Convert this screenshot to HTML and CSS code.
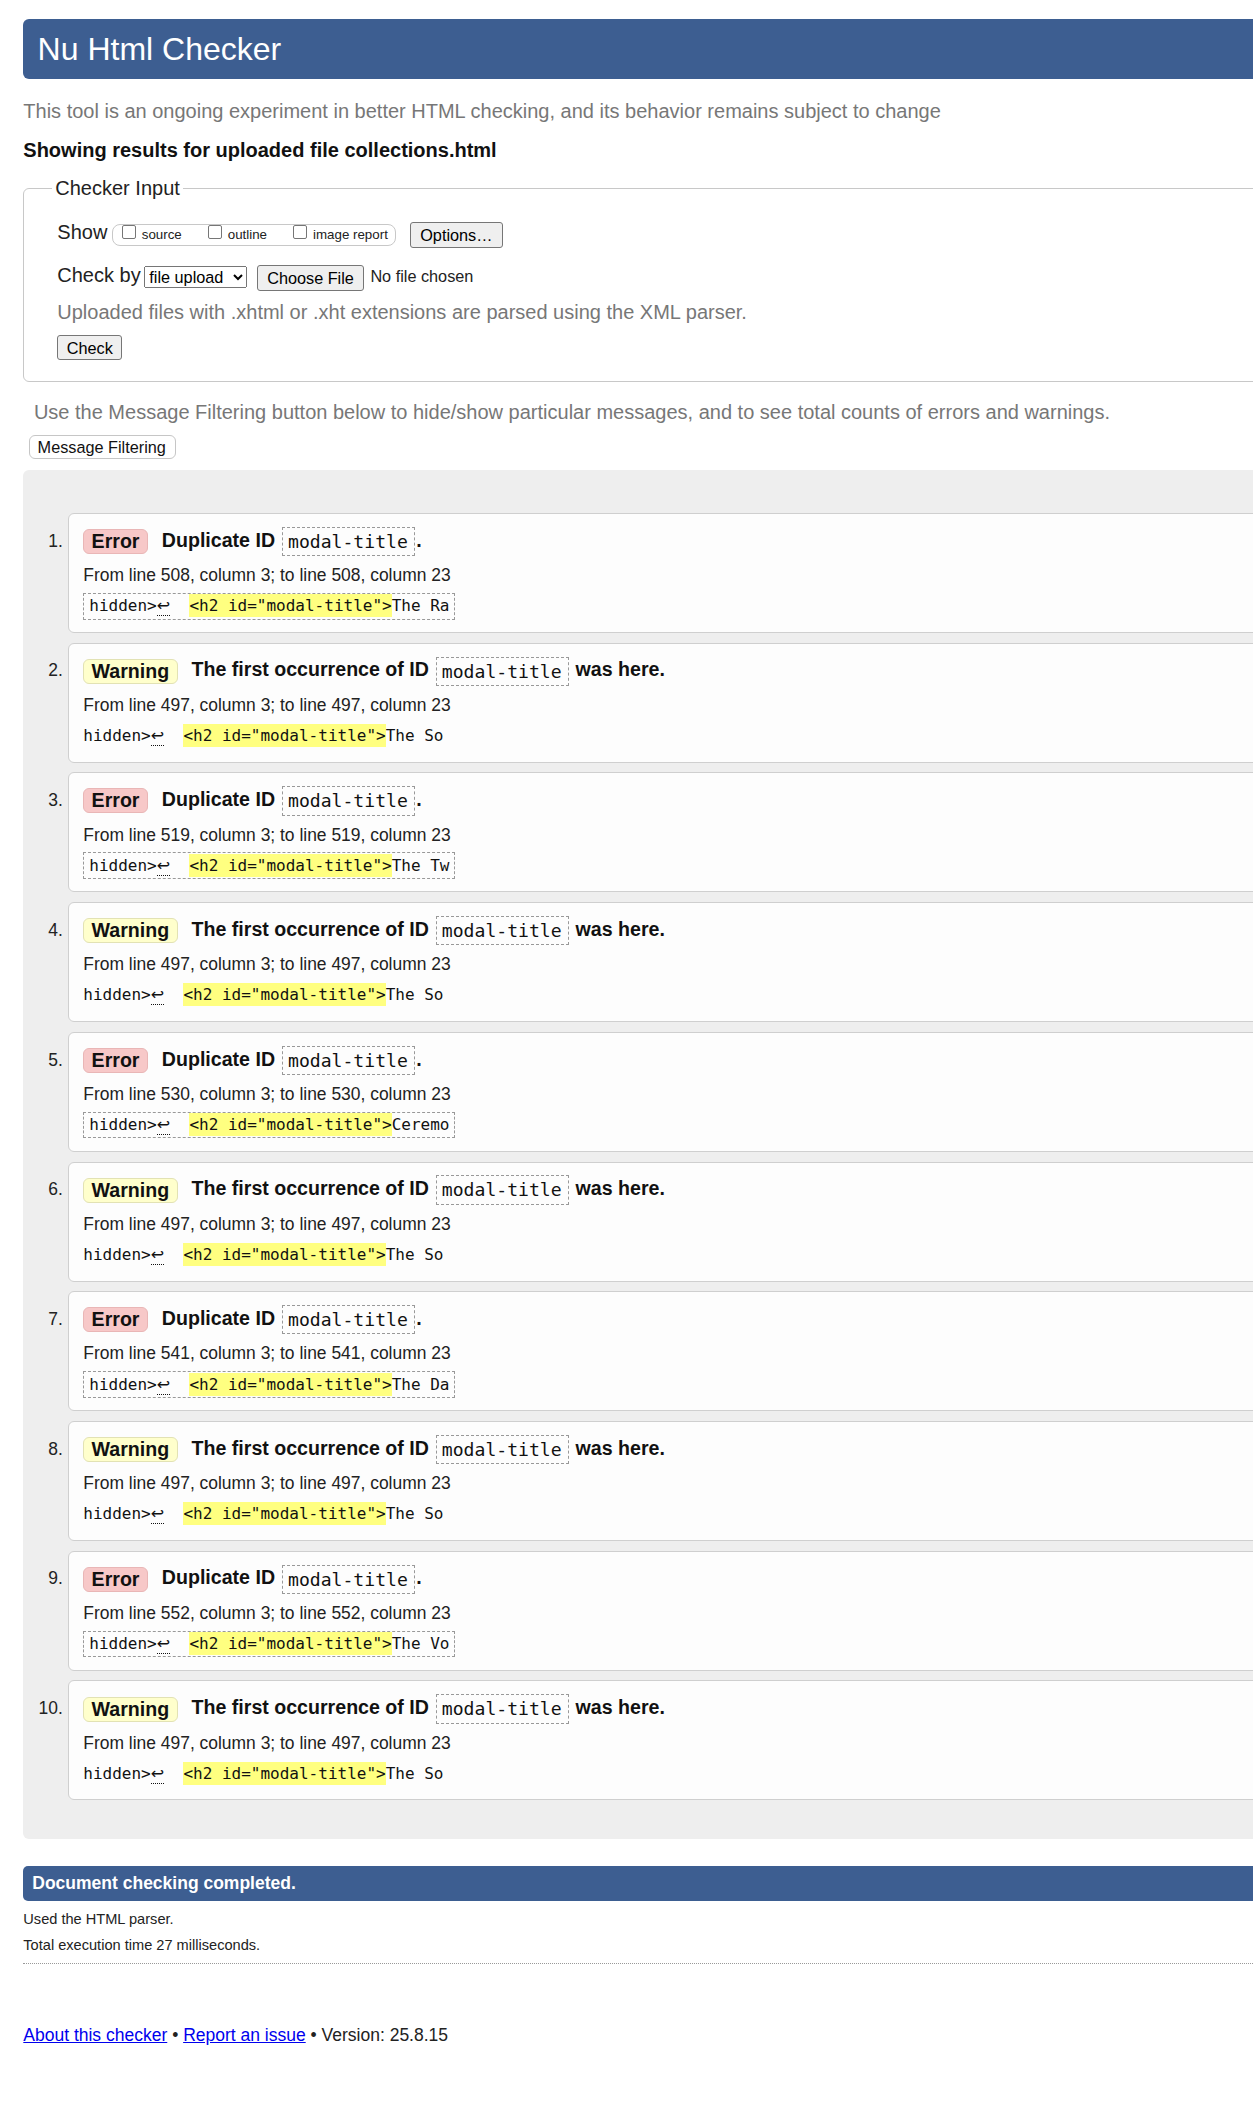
FILE: index.html
```html
<!DOCTYPE html>
<html lang="en">
<head>
<meta charset="utf-8">
<title>Showing results for uploaded file collections.html - Nu Html Checker</title>
<link rel="stylesheet" href="styles.css">
</head>
<body>
<div class="page">
  <h1 class="masthead">Nu Html Checker</h1>
  <p class="tagline">This tool is an ongoing experiment in better HTML checking, and its behavior remains subject to change</p>
  <p class="results-for">Showing results for uploaded file collections.html</p>

  <form class="checker" action="#">
    <fieldset class="checker-input">
      <legend>Checker Input</legend>
      <div class="row row-show">
        <span class="row-label label-show">Show</span>
        <span class="show-group">
          <label class="opt"><input type="checkbox" class="cb"><span>source</span></label>
          <label class="opt"><input type="checkbox" class="cb"><span>outline</span></label>
          <label class="opt"><input type="checkbox" class="cb"><span>image report</span></label>
        </span>
        <button type="button" class="btn btn-options">Options…</button>
      </div>
      <div class="row row-check-by">
        <span class="row-label label-checkby">Check by</span>
        <select class="sel"><option>file upload</option></select>
        <button type="button" class="btn btn-file">Choose File</button>
        <span class="file-status">No file chosen</span>
      </div>
      <p class="hint">Uploaded files with .xhtml or .xht extensions are parsed using the XML parser.</p>
      <div class="row row-submit">
        <button type="button" class="btn btn-check">Check</button>
      </div>
    </fieldset>
  </form>

  <p class="filter-note">Use the Message Filtering button below to hide/show particular messages, and to see total counts of errors and warnings.</p>
  <button type="button" class="btn-filter">Message Filtering</button>

  <ol class="messages">
    <li class="msg msg-error">
      <p class="msg-title"><span class="badge">Error</span>Duplicate ID <code class="id">modal-title</code>.</p>
      <p class="msg-loc">From line 508, column 3; to line 508, column 23</p>
      <p class="extract">hidden&gt;<span class="lf">↩</span>  <mark class="hl">&lt;h2 id="modal-title"&gt;</mark>The Ra</p>
    </li>
    <li class="msg msg-warning">
      <p class="msg-title"><span class="badge">Warning</span>The first occurrence of ID <code class="id">modal-title</code> was here.</p>
      <p class="msg-loc">From line 497, column 3; to line 497, column 23</p>
      <p class="extract">hidden&gt;<span class="lf">↩</span>  <mark class="hl">&lt;h2 id="modal-title"&gt;</mark>The So</p>
    </li>
    <li class="msg msg-error">
      <p class="msg-title"><span class="badge">Error</span>Duplicate ID <code class="id">modal-title</code>.</p>
      <p class="msg-loc">From line 519, column 3; to line 519, column 23</p>
      <p class="extract">hidden&gt;<span class="lf">↩</span>  <mark class="hl">&lt;h2 id="modal-title"&gt;</mark>The Tw</p>
    </li>
    <li class="msg msg-warning">
      <p class="msg-title"><span class="badge">Warning</span>The first occurrence of ID <code class="id">modal-title</code> was here.</p>
      <p class="msg-loc">From line 497, column 3; to line 497, column 23</p>
      <p class="extract">hidden&gt;<span class="lf">↩</span>  <mark class="hl">&lt;h2 id="modal-title"&gt;</mark>The So</p>
    </li>
    <li class="msg msg-error">
      <p class="msg-title"><span class="badge">Error</span>Duplicate ID <code class="id">modal-title</code>.</p>
      <p class="msg-loc">From line 530, column 3; to line 530, column 23</p>
      <p class="extract">hidden&gt;<span class="lf">↩</span>  <mark class="hl">&lt;h2 id="modal-title"&gt;</mark>Ceremo</p>
    </li>
    <li class="msg msg-warning">
      <p class="msg-title"><span class="badge">Warning</span>The first occurrence of ID <code class="id">modal-title</code> was here.</p>
      <p class="msg-loc">From line 497, column 3; to line 497, column 23</p>
      <p class="extract">hidden&gt;<span class="lf">↩</span>  <mark class="hl">&lt;h2 id="modal-title"&gt;</mark>The So</p>
    </li>
    <li class="msg msg-error">
      <p class="msg-title"><span class="badge">Error</span>Duplicate ID <code class="id">modal-title</code>.</p>
      <p class="msg-loc">From line 541, column 3; to line 541, column 23</p>
      <p class="extract">hidden&gt;<span class="lf">↩</span>  <mark class="hl">&lt;h2 id="modal-title"&gt;</mark>The Da</p>
    </li>
    <li class="msg msg-warning">
      <p class="msg-title"><span class="badge">Warning</span>The first occurrence of ID <code class="id">modal-title</code> was here.</p>
      <p class="msg-loc">From line 497, column 3; to line 497, column 23</p>
      <p class="extract">hidden&gt;<span class="lf">↩</span>  <mark class="hl">&lt;h2 id="modal-title"&gt;</mark>The So</p>
    </li>
    <li class="msg msg-error">
      <p class="msg-title"><span class="badge">Error</span>Duplicate ID <code class="id">modal-title</code>.</p>
      <p class="msg-loc">From line 552, column 3; to line 552, column 23</p>
      <p class="extract">hidden&gt;<span class="lf">↩</span>  <mark class="hl">&lt;h2 id="modal-title"&gt;</mark>The Vo</p>
    </li>
    <li class="msg msg-warning">
      <p class="msg-title"><span class="badge">Warning</span>The first occurrence of ID <code class="id">modal-title</code> was here.</p>
      <p class="msg-loc">From line 497, column 3; to line 497, column 23</p>
      <p class="extract">hidden&gt;<span class="lf">↩</span>  <mark class="hl">&lt;h2 id="modal-title"&gt;</mark>The So</p>
    </li>
  </ol>

  <h2 class="done">Document checking completed.</h2>
  <p class="stat">Used the HTML parser.</p>
  <p class="stat stat-time">Total execution time 27 milliseconds.</p>
  <hr class="sep">
  <p class="footer"><a href="#">About this checker</a> • <a href="#">Report an issue</a> • Version: 25.8.15</p>
</div>
</body>
</html>
```

FILE: styles.css
```css
* {
  box-sizing: border-box;
}

body {
  margin: 0;
  overflow-x: hidden;
  font-family: "Liberation Sans", Arial, sans-serif;
  color: #222;
  background: #fff;
}

.page {
  margin: 0 -40px 0 23.3px;
  padding: 19px 0 40px;
}

/* header */
.masthead {
  margin: 0;
  height: 60px;
  padding: 10px 14.3px;
  font-size: 32px;
  line-height: 40px;
  font-weight: normal;
  color: #fff;
  background: #3d5e91;
  border-radius: 6px;
}

.tagline {
  margin: 20.4px 0 0;
  font-size: 20px;
  line-height: 24px;
  color: #777;
}

.results-for {
  margin: 15px 0 0;
  font-size: 20px;
  line-height: 24px;
  font-weight: bold;
  color: #111;
}

/* checker input */
.checker {
  margin: 15px 0 0;
}

.checker-input {
  margin: 0;
  min-width: 0;
  padding: 21px 20px 20.3px 33px;
  border: 1px solid #c8c8c8;
  border-radius: 6px;
}

.checker-input legend {
  margin-left: -5px;
  padding: 0 3px;
  font-size: 20px;
  line-height: 23px;
  color: #222;
}

.row {
  display: flex;
  align-items: flex-start;
}

.row-label {
  font-size: 20px;
  line-height: 23px;
  color: #222;
}

.label-show {
  margin-right: 5px;
}

.label-checkby {
  margin-right: 3.6px;
}

.show-group {
  display: flex;
  align-items: flex-start;
  height: 22.7px;
  margin-top: 2.4px;
  padding: 0 7px 0 8.4px;
  border: 1px solid #c8c8c8;
  border-radius: 8px;
}

.opt {
  display: flex;
  align-items: flex-start;
}

.opt + .opt {
  margin-left: 26px;
}

.cb {
  appearance: none;
  -webkit-appearance: none;
  width: 14px;
  height: 14px;
  margin: 0 6px 0 0;
  border: 1px solid #767676;
  border-radius: 2px;
  background: #fff;
}

.opt span {
  font-size: 13.33px;
  line-height: 20px;
  color: #222;
}

.btn {
  height: 26px;
  padding: 0 9px;
  font-family: inherit;
  font-size: 16.25px;
  line-height: 24px;
  color: #000;
  background: #efefef;
  border: 1px solid #767676;
  border-radius: 3px;
}

.btn-options {
  margin: 0.7px 0 0 14.4px;
}

.row-check-by {
  margin-top: 15.5px;
}

.sel {
  width: 102.4px;
  height: 22px;
  margin: 2.7px 10px 0 0;
  font-family: inherit;
  font-size: 16.25px;
  color: #000;
}

.btn-file {
  margin-top: 1.7px;
  padding: 0 9.5px;
}

.file-status {
  margin: 1.3px 0 0 6px;
  font-size: 16.25px;
  line-height: 23px;
  color: #222;
}

.hint {
  margin: 9.6px 0 0;
  font-size: 20px;
  line-height: 23px;
  color: #777;
}

.row-submit {
  margin-top: 11.6px;
}

.btn-check {
  height: 25px;
  padding: 0 8.5px;
}

/* filter */
.filter-note {
  margin: 19.6px 0 0 10.6px;
  font-size: 20px;
  line-height: 23px;
  color: #777;
}

.btn-filter {
  display: block;
  height: 23.6px;
  margin: 11.1px 0 0 5.3px;
  padding: 0 9px 0 8px;
  font-family: inherit;
  font-size: 16.25px;
  line-height: 21px;
  color: #111;
  background: #fff;
  border: 1px solid #c6c6c6;
  border-radius: 6px;
}

/* messages */
.messages {
  margin: 10.7px 0 0;
  padding: 43.3px 0 29px 44.4px;
  list-style: decimal outside;
  background: #eee;
  border-radius: 6px;
}

.msg {
  margin: 0 0 9.8px;
  padding: 9.7px 0 12.4px 14.6px;
  font-size: 17.45px;
  color: #222;
  background: #fdfdfd;
  border: 1px solid #cfcfcf;
  border-radius: 6px;
}

.msg p {
  margin: 0;
}

.msg-title {
  font-size: 19.6px;
  line-height: 32px;
  font-weight: bold;
  color: #111;
  white-space: nowrap;
}

.badge {
  display: inline-block;
  margin-right: 14px;
  padding: 0 7.3px;
  line-height: 23px;
  vertical-align: middle;
  border: 1px solid;
  border-radius: 6px;
}

.msg-error .badge {
  background: #f7c8c8;
  border-color: #e9b6b6;
}

.msg-warning .badge {
  background: #ffffcc;
  border-color: #e2e2b4;
}

.id {
  display: inline-block;
  margin: 0 1.5px;
  padding: 0 6px 0 5px;
  font-family: "DejaVu Sans Mono", "Liberation Mono", monospace;
  font-size: 18.1px;
  font-weight: normal;
  line-height: 27.3px;
  vertical-align: middle;
  border: 1px dashed #999;
}

.msg .msg-loc {
  margin-top: 6px;
  line-height: 26px;
}

.msg .extract {
  width: fit-content;
  height: 26.7px;
  margin-top: 4.7px;
  padding: 2.35px 5px;
  font-family: "DejaVu Sans Mono", "Liberation Mono", monospace;
  font-size: 16px;
  line-height: 20px;
  white-space: pre;
  color: #111;
  border: 1px dashed #999;
}

.msg-warning .extract {
  padding: 3.35px 0;
  border: 0;
}

.lf {
  font-family: "DejaVu Sans", sans-serif;
  border-bottom: 1px dotted #111;
}

.hl {
  padding: 2px 0;
  color: inherit;
  background: #ffff80;
}

/* summary */
.done {
  margin: 26.7px 0 0;
  height: 34.7px;
  padding: 0 9px;
  font-size: 17.5px;
  line-height: 34.7px;
  font-weight: bold;
  color: #fff;
  background: #3d5e91;
  border-radius: 5px;
}

.stat {
  margin: 8.5px 0 0;
  font-size: 14.6px;
  line-height: 20px;
  color: #222;
}

.stat-time {
  margin-top: 5.7px;
}

.sep {
  height: 0;
  margin: 8.4px 0 0;
  border: 0;
  border-top: 1px dotted #999;
}

.footer {
  margin: 58.4px 0 0;
  font-size: 17.5px;
  line-height: 24px;
  color: #222;
}

.footer a {
  color: #0000ee;
}
```
